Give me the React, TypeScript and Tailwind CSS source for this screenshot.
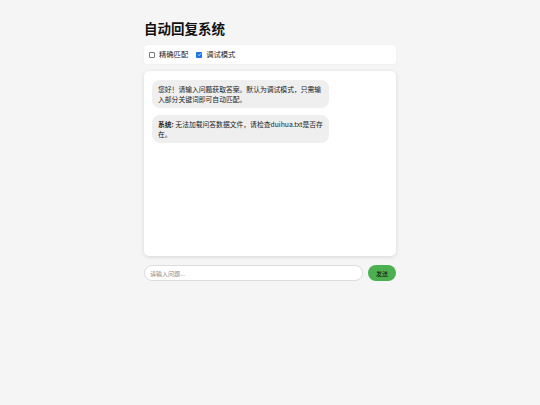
import React from "react";

const font = { fontFamily: '"Noto Sans CJK SC", "Liberation Sans", sans-serif' };

function Check({ checked, label }: { checked?: boolean; label: string }) {
  return (
    <label className="flex items-center gap-[4px] text-[7.3px] text-[#222]">
      {checked ? (
        <span className="flex h-[6px] w-[6px] items-center justify-center rounded-[1px] bg-[#1a73e8]">
          <svg viewBox="0 0 10 10" className="h-[5px] w-[5px]">
            <path d="M2 5.2l2 2 4-4.4" fill="none" stroke="#fff" strokeWidth="1.6" />
          </svg>
        </span>
      ) : (
        <span className="h-[6px] w-[6px] rounded-[1px] border border-[#777] bg-white" />
      )}
      {label}
    </label>
  );
}

export default function App() {
  return (
    <div className="min-h-[405px] bg-[#f5f5f5]" style={font}>
      <div className="mx-auto w-[252px] pt-[19px]">
        <h1 className="text-[13.5px] font-bold leading-[18px] text-[#111]">自动回复系统</h1>

        <div className="mt-[8px] flex h-[19px] items-center gap-[8px] rounded-[3px] bg-white px-[5px] shadow-[0_0_2px_rgba(0,0,0,0.06)]">
          <Check label="精确匹配" />
          <Check checked label="调试模式" />
        </div>

        <div className="mt-[7px] flex h-[185px] flex-col gap-[7px] rounded-[5px] bg-white px-[8px] py-[9px] shadow-[0_1px_4px_rgba(0,0,0,0.12)]">
          <div className="w-[177px] rounded-[8px] bg-[#efefef] px-[6px] py-[4px] text-[6.8px] leading-[10px] text-[#222]">
            您好！请输入问题获取答案。默认为调试模式，只需输入部分关键词即可自动匹配。
          </div>
          <div className="w-[177px] rounded-[8px] bg-[#efefef] px-[6px] py-[4px] text-[6.8px] leading-[10px] text-[#222]">
            <b className="font-bold">系统:</b> 无法加载问答数据文件，请检查duihua.txt是否存在。
          </div>
        </div>

        <div className="mt-[9px] flex items-center gap-[5px]">
          <input
            placeholder="请输入问题..."
            className="h-[16px] flex-1 rounded-full border border-[#ddd] bg-white px-[5px] text-[6px] text-[#333] outline-none placeholder:text-[#888]"
            style={font}
          />
          <button className="h-[16px] w-[28px] rounded-full bg-[#4caf50] text-[6px] text-[#111]">
            发送
          </button>
        </div>
      </div>
    </div>
  );
}
